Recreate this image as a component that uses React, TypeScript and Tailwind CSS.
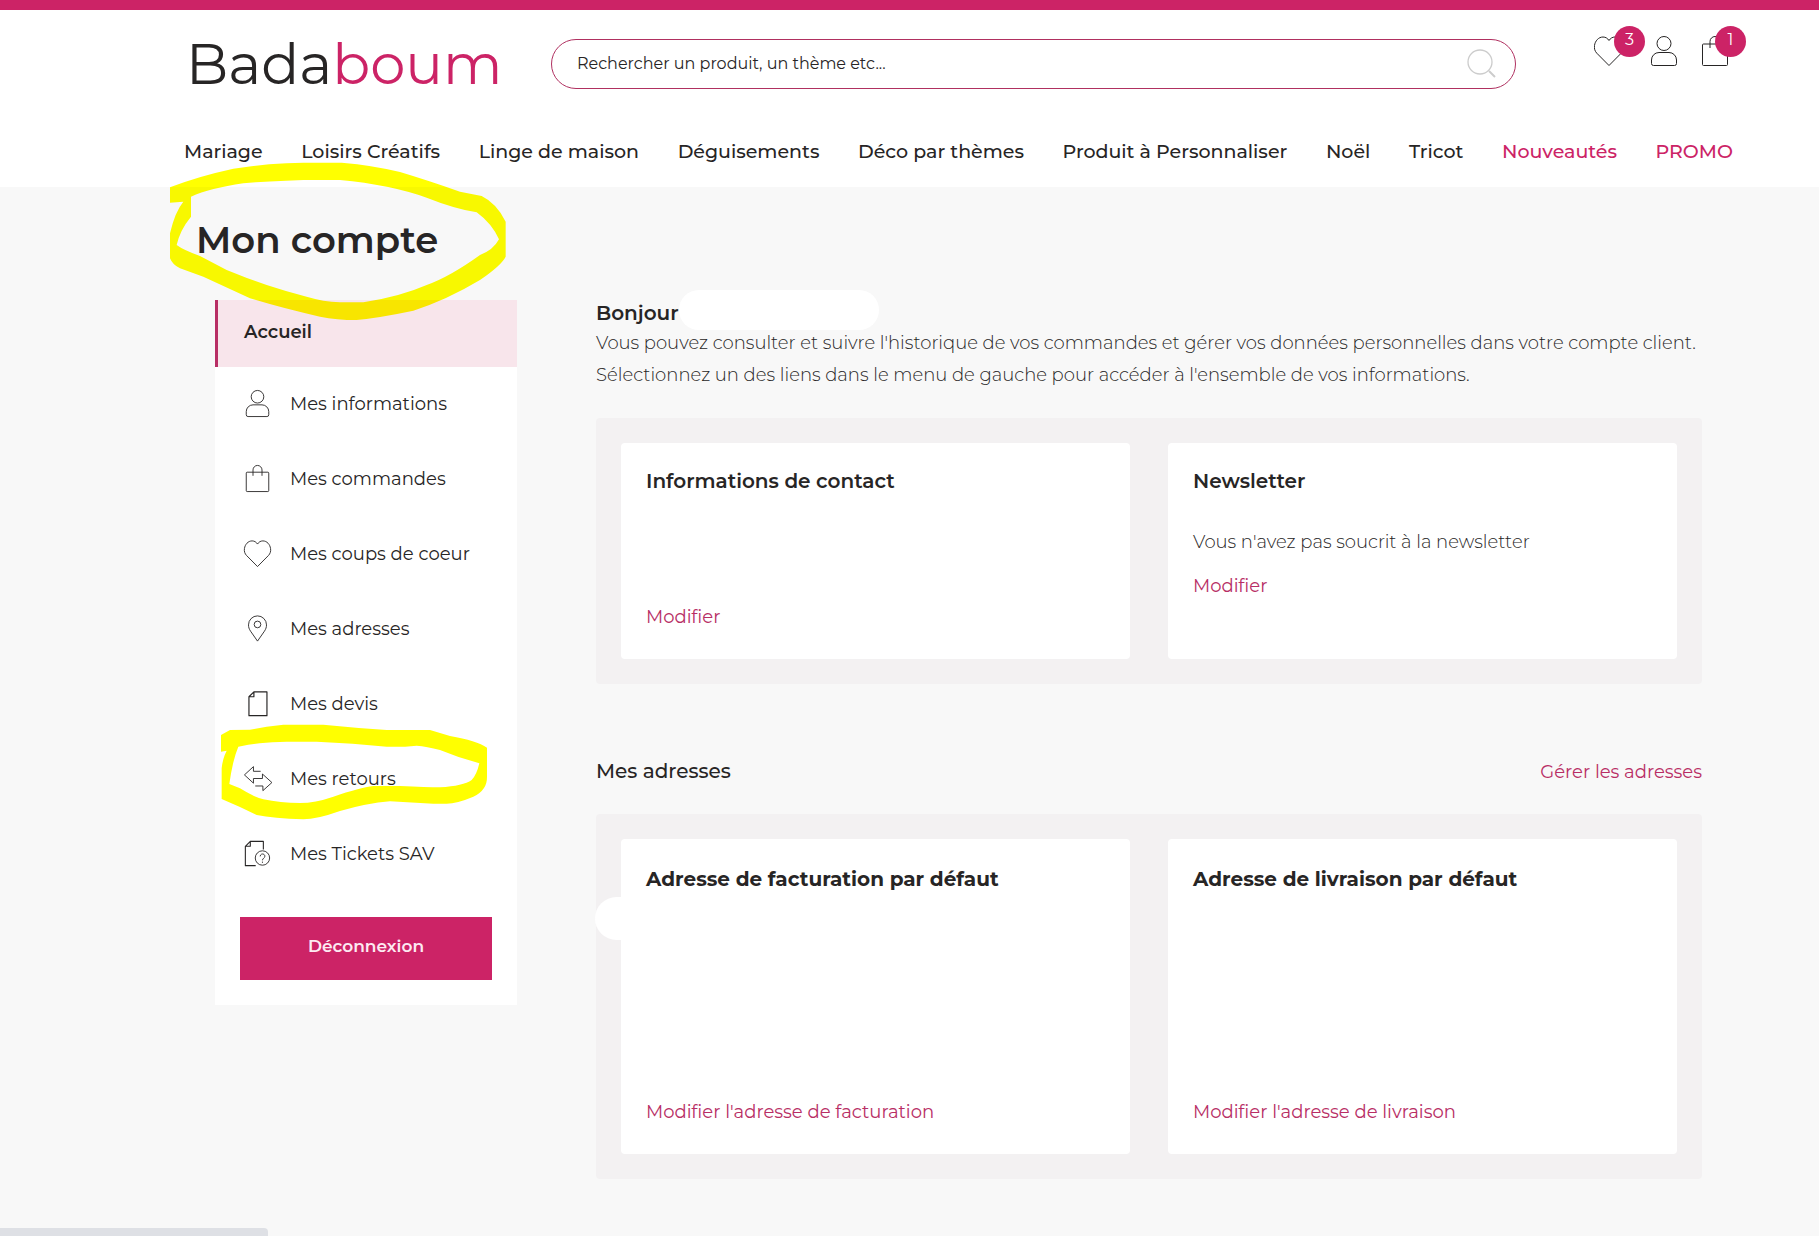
import React from "react";

type IconProps = { className?: string };

const Svg: React.FC<IconProps & { children: React.ReactNode }> = ({ className, children }) => (
  <svg
    viewBox="0 0 30 30"
    fill="none"
    stroke="currentColor"
    strokeLinejoin="round"
    aria-hidden="true"
    className={className ?? "size-[30px]"}
  >
    {children}
  </svg>
);

const UserIcon = ({ className }: IconProps) => (
  <Svg className={className}>
    <circle cx="15" cy="7.5" r="7" />
    <path d="M4.5 29.5h21a2 2 0 0 0 2-2V24a7.5 7.5 0 0 0-7.5-7.5H10A7.5 7.5 0 0 0 2.5 24v3.5a2 2 0 0 0 2 2z" />
  </Svg>
);

const BagIcon = ({ className }: IconProps) => (
  <Svg className={className}>
    <rect x="2.5" y="8" width="25" height="21.5" rx="1" />
    <path d="M10 12V5.5a5 5 0 0 1 10 0V12" />
  </Svg>
);

const HeartIcon = ({ className }: IconProps) => (
  <Svg className={className}>
    <path d="M15 29.5 2.8 17.2C.9 15.2 0 12.6.5 9.5 1.1 5 4.5 1 9 1c2.6 0 4.6 1.3 6 3.5C16.4 2.3 18.4 1 21 1c4.5 0 7.9 4 8.5 8.5.5 3.1-.4 5.7-2.3 7.7z" />
  </Svg>
);

const PinIcon = ({ className }: IconProps) => (
  <Svg className={className}>
    <path d="M15 29 7.3 18C5.7 15.6 5 13.5 5 11a10 10 0 0 1 20 0c0 2.5-.7 4.6-2.3 7z" />
    <circle cx="15" cy="10.5" r="3.7" />
  </Svg>
);

const FileIcon = ({ className }: IconProps) => (
  <Svg className={className}>
    <path strokeWidth="1.3" d="M11 2h14.5v26.5h-20V7.5zM11 2v5.5H5.5" />
  </Svg>
);

const ReturnIcon = ({ className }: IconProps) => (
  <Svg className={className}>
    <path d="M18.5 7h-8V1.8L.5 11l10 9.2V15h10v-5L31 19.5l-10 9v-5.2h-8.5" />
  </Svg>
);

const TicketIcon = ({ className }: IconProps) => (
  <Svg className={className}>
    <path strokeWidth="1.2" d="M13 28.5H1.5V7L7 1.5h14.5v9M7 1.5V7H1.5" />
    <circle cx="20.5" cy="20" r="8" />
    <path d="M18 18.2c0-3.6 5.2-3.4 5.2-.2 0 2.2-2.7 2.2-2.7 4.6M20.5 24v1.4" />
  </Svg>
);

const navItems = [
  "Mariage",
  "Loisirs Créatifs",
  "Linge de maison",
  "Déguisements",
  "Déco par thèmes",
  "Produit à Personnaliser",
  "Noël",
  "Tricot",
];

const menu = [
  { label: "Mes informations", Icon: UserIcon },
  { label: "Mes commandes", Icon: BagIcon },
  { label: "Mes coups de coeur", Icon: HeartIcon },
  { label: "Mes adresses", Icon: PinIcon },
  { label: "Mes devis", Icon: FileIcon },
  { label: "Mes retours", Icon: ReturnIcon, marked: true },
  { label: "Mes Tickets SAV", Icon: TicketIcon },
];

const Badge: React.FC<{ className: string; children: React.ReactNode }> = ({ className, children }) => (
  <span
    className={`absolute top-0 flex size-[31px] justify-center rounded-full bg-[#cc2366] text-base leading-7 text-white ${className}`}
  >
    {children}
  </span>
);

const Header: React.FC = () => (
  <header className="border-t-[10px] border-[#cc2366] bg-white pt-4 pr-[86px] pb-[21px] pl-[184px]">
    <div className="flex items-start">
      <a href="#" className="mt-[13px] w-[367px] shrink-0 pl-0.5 text-[56px] leading-[50px]">
        Bada<span className="text-[#cc2366]">boum</span>
      </a>
      <form className="mt-[13px] flex h-[50px] flex-1 items-center rounded-full border border-[#b03060] pr-[18px] pl-[25px]">
        <input
          type="text"
          aria-label="Rechercher"
          placeholder="Rechercher un produit, un thème etc..."
          className="flex-1 text-base outline-none placeholder:text-[#272525]"
        />
        <button type="submit" aria-label="Lancer la recherche" className="text-[#cccccc]">
          <Svg>
            <circle cx="13" cy="13" r="12" strokeWidth="1.3" />
            <path strokeWidth="2" d="m22 22 6 6" />
          </Svg>
        </button>
      </form>
      <div className="flex w-[217px] shrink-0 pl-[78px]">
        <a href="#" aria-label="Mes coups de coeur" className="relative mr-[25px] pt-2.5">
          <HeartIcon />
          <Badge className="left-5">3</Badge>
        </a>
        <a href="#" aria-label="Mon compte" className="mr-[21px] pt-2.5">
          <UserIcon />
        </a>
        <a href="#" aria-label="Panier" className="relative pt-2.5">
          <BagIcon />
          <Badge className="left-[15px]">1</Badge>
        </a>
      </div>
    </div>
    <nav className="mt-[49px] flex justify-between text-[19px] leading-7 font-medium whitespace-nowrap">
      {navItems.map((item) => (
        <a key={item} href="#">
          {item}
        </a>
      ))}
      <a href="#" className="text-[#cc2366]">Nouveautés</a>
      <a href="#" className="text-[#cc2366]">PROMO</a>
    </nav>
  </header>
);

const TitleMark = () => (
  <svg
    viewBox="0 0 1050 525"
    fill="#ffff00"
    fillRule="evenodd"
    aria-hidden="true"
    className="pointer-events-none absolute -top-[66px] -left-9 z-10 w-[350px] mix-blend-multiply"
  >
    <path d="M30 112Q110 80 220 56Q330 38 430 38H545Q640 46 720 66Q800 90 900 125L965 138Q1010 160 1037 215V320Q1025 345 960 390Q860 450 760 482Q660 503 590 510Q530 510 480 500Q380 478 270 445L130 380L60 355Q38 345 30 325V250Q45 185 70 155L30 158ZM93 140V200Q60 240 50 285Q70 300 120 318L200 360Q320 410 440 440Q490 455 540 457H610Q720 440 800 405Q870 380 960 315Q1000 300 1017 268Q995 220 950 187Q880 175 800 143Q690 104 540 90H430Q320 94 250 100Q150 115 93 140Z" />
  </svg>
);

const ReturnMark = () => (
  <svg
    viewBox="0 0 900 450"
    fill="#ffff00"
    fillRule="evenodd"
    aria-hidden="true"
    className="pointer-events-none absolute -top-[62px] -left-[15px] z-10 w-[300px] max-w-none mix-blend-multiply"
  >
    <path d="M63 165L90 150L150 149Q200 138 250 134H370Q460 143 560 150H690L750 168Q830 182 861 203V290Q862 330 820 350Q770 371 740 371H700L570 364Q500 370 420 393Q350 418 310 418Q220 415 170 405Q120 380 65 357V265Q68 235 80 212L63 215ZM115 200Q98 240 88 312L120 325Q165 353 190 358Q240 369 300 369Q345 369 400 350Q480 323 520 318H600Q680 322 720 322Q790 318 815 300Q830 285 838 250Q780 235 720 210Q680 199 650 197Q600 202 560 200Q460 190 350 185H260Q170 187 115 200Z" />
  </svg>
);

const Sidebar: React.FC = () => (
  <aside className="mt-2.5 ml-[19px] w-[302px] shrink-0 self-start bg-white pb-[25px] text-lg">
    <a href="#" className="flex h-[67px] items-center border-l-[3px] border-[#b82e65] bg-[#f8e5eb] pb-1 pl-[26px] font-semibold">
      Accueil
    </a>
    <ul>
      {menu.map(({ label, Icon, marked }) => (
        <li key={label} className="relative">
          <a href="#" className="flex h-[75px] items-center gap-[19px] pb-0.5 pl-[29px]">
            <Icon className="size-[27px] overflow-visible" />
            {label}
          </a>
          {marked && <ReturnMark />}
        </li>
      ))}
    </ul>
    <div className="px-[25px] pt-[25px]">
      <button type="button" className="h-[63px] w-full bg-[#cc2366] pb-1 text-[17px] font-semibold text-[#fdeaf2]">
        Déconnexion
      </button>
    </div>
  </aside>
);

const Panel: React.FC<{ children: React.ReactNode }> = ({ children }) => (
  <div className="mt-7 grid grid-cols-2 gap-[38px] rounded bg-[#f3f1f2] p-[25px]">{children}</div>
);

const linkClass = "text-lg leading-7 text-[#b82e65]";

const Account: React.FC = () => (
  <div className="min-w-0 flex-1">
    <div className="flex h-10 items-end">
      <h2 className="text-xl leading-[34px] font-semibold">Bonjour</h2>
      <span className="h-10 w-[200px] rounded-full bg-white" />
    </div>
    <p className="-mt-[3px] -mb-px text-lg leading-8 font-light">
      Vous pouvez consulter et suivre l'historique de vos commandes et gérer vos données personnelles dans votre compte client.
      <br />
      Sélectionnez un des liens dans le menu de gauche pour accéder à l'ensemble de vos informations.
    </p>

    <Panel>
      <section className="flex min-h-[216px] flex-col items-start rounded bg-white px-[25px] pt-6 pb-7">
        <h3 className="text-xl leading-7 font-semibold">Informations de contact</h3>
        <a href="#" className={`mt-auto ${linkClass}`}>Modifier</a>
      </section>
      <section className="flex min-h-[216px] flex-col items-start rounded bg-white px-[25px] pt-6 pb-7">
        <h3 className="text-xl leading-7 font-semibold">Newsletter</h3>
        <p className="mt-[33px] text-lg leading-7 font-light">Vous n'avez pas soucrit à la newsletter</p>
        <a href="#" className={`mt-4 ${linkClass}`}>Modifier</a>
      </section>
    </Panel>

    <div className="mt-[73px] flex items-baseline justify-between">
      <h2 className="text-xl leading-7 font-medium">Mes adresses</h2>
      <a href="#" className={linkClass}>Gérer les adresses</a>
    </div>

    <Panel>
      <section className="relative flex min-h-[315px] flex-col items-start rounded bg-white px-[25px] pt-6 pb-7">
        <span className="absolute top-[58px] -left-[26px] h-[43px] w-12 rounded-full bg-white" />
        <h3 className="text-xl leading-8 font-bold">Adresse de facturation par défaut</h3>
        <a href="#" className={`mt-auto ${linkClass}`}>Modifier l'adresse de facturation</a>
      </section>
      <section className="flex min-h-[315px] flex-col items-start rounded bg-white px-[25px] pt-6 pb-7">
        <h3 className="text-xl leading-8 font-bold">Adresse de livraison par défaut</h3>
        <a href="#" className={`mt-auto ${linkClass}`}>Modifier l'adresse de livraison</a>
      </section>
    </Panel>
  </div>
);

export default function App() {
  return (
    <div className="min-h-screen bg-[#f8f8f8] font-['Montserrat','Inter',sans-serif] text-[#272525]">
      <Header />
      <main className="pt-[29px] pr-[117px] pb-14 pl-[196px]">
        <div className="relative">
          <h1 className="text-[37px] leading-12 font-semibold">Mon compte</h1>
          <TitleMark />
        </div>
        <div className="mt-[26px] flex gap-[79px]">
          <Sidebar />
          <Account />
        </div>
      </main>
      <div className="fixed bottom-0 left-0 h-2 w-[268px] rounded-tr bg-[#dee0e5]" />
    </div>
  );
}
